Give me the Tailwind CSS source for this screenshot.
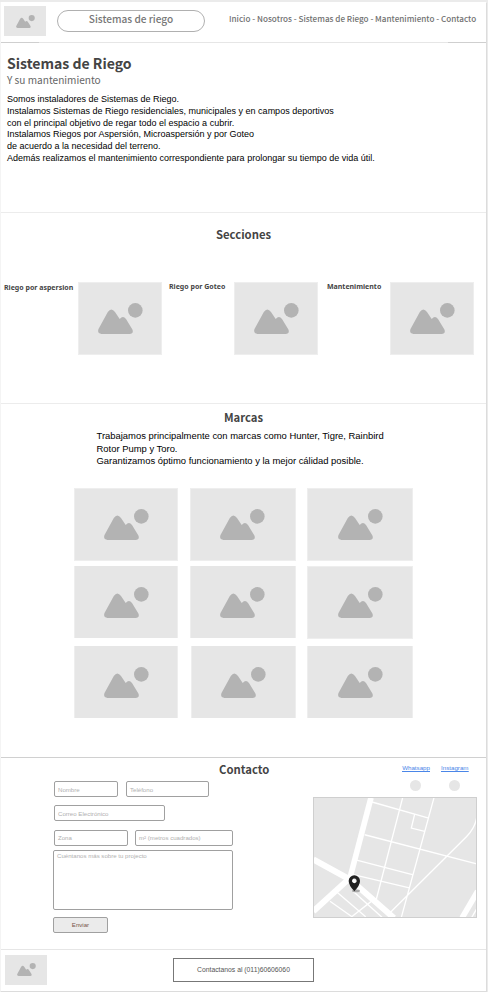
<!DOCTYPE html>
<html lang="es">
<head>
<meta charset="utf-8">
<title>Sistemas de Riego</title>
<script src="https://cdn.jsdelivr.net/npm/@tailwindcss/browser@4"></script>
</head>
<body class="bg-[#ebebeb] w-[488px] h-[992px] overflow-hidden pt-[2px] font-['Liberation_Sans',Arial,sans-serif] text-black">
<svg class="hidden">
  <symbol id="pic" viewBox="0 0 45 31">
    <circle cx="37.3" cy="7.4" r="7.3"/>
    <path d="M9.8 9Q13.3 3.8 17 9L21.7 16Q25 12.2 28 16L34.4 26.5Q36 30.6 31.5 30.9H3.5Q-1 30.5 .5 26Z"/>
  </symbol>
</svg>
<div class="w-[486px] h-[989px] bg-white border-l border-[#f4f4f4] shadow-[1px_1px_0_#dcdcdc] flex flex-col whitespace-nowrap">

  <header class="h-[41px] flex items-start">
    <div class="w-[42px] h-[30px] mt-[4px] ml-[3px] bg-[#e6e6e6] flex justify-center pt-[9px] shrink-0"><svg class="w-[19px] h-[13px] fill-[#b3b3b3]"><use href="#pic"/></svg></div>
    <div class="ml-[11px] mt-[8px] w-[148px] h-[22px] rounded-full border border-[#b0b0b0] flex justify-center shrink-0 font-['Noto_Sans_CJK_SC',sans-serif] font-medium text-[#777] text-[10.1px] leading-[15px]">Sistemas de riego</div>
    <nav class="ml-[24px] mt-[10px] font-['Noto_Sans_CJK_SC',sans-serif] font-medium text-[#707070] text-[8.15px] leading-[14px]">Inicio - Nosotros - Sistemas de Riego - Mantenimiento - Contacto</nav>
  </header>
  <div class="h-px -mt-px flex shrink-0 bg-[#e6e6e6] justify-between"><i class="w-[38px] bg-[#cfcfcf]"></i><i class="w-[38px] bg-[#cfcfcf]"></i></div>

  <section class="h-[170px] border-b border-[#ececec] pl-[6px] pt-[11px] shrink-0">
    <h1 class="font-['Noto_Sans_CJK_SC',sans-serif] font-bold text-[#444] text-[14.05px] leading-[19px]">Sistemas de Riego</h1>
    <h2 class="font-['Noto_Sans_CJK_SC',sans-serif] text-[#666] text-[10.1px] leading-[13px]">Y su mantenimiento</h2>
    <div class="mt-[8px] text-[9px] leading-[11.8px]">
      <p>Somos instaladores de Sistemas de Riego.</p>
      <p>Instalamos Sistemas de Riego residenciales, municipales y en campos deportivos</p>
      <p>con el principal objetivo de regar todo el espacio a cubrir.</p>
      <p>Instalamos Riegos por Aspersión, Microaspersión y por Goteo</p>
      <p>de acuerdo a la necesidad del terreno.</p>
      <p>Además realizamos el mantenimiento correspondiente para prolongar su tiempo de vida útil.</p>
    </div>
  </section>

  <section class="h-[191px] border-b border-[#ececec] shrink-0">
    <h2 class="text-center pt-[12px] font-['Noto_Sans_CJK_SC',sans-serif] font-bold text-[#444] text-[11.3px] leading-[18px]">Secciones</h2>
    <div class="mt-[39px] flex pl-[3px] font-['Noto_Sans',sans-serif] font-bold text-[#444] text-[7px] leading-[10px]">
      <h3 class="w-[74px] pt-px">Riego por aspersion</h3>
      <div class="w-[84px] h-[73px] bg-[#e6e6e6] border border-[#eee] pl-[19px] pt-[20px]"><svg class="w-[45px] h-[31px] fill-[#b3b3b3]"><use href="#pic"/></svg></div>
      <h3 class="w-[72px] pl-[7px]">Riego por Goteo</h3>
      <div class="w-[84px] h-[73px] bg-[#e6e6e6] border border-[#eee] pl-[19px] pt-[20px]"><svg class="w-[45px] h-[31px] fill-[#b3b3b3]"><use href="#pic"/></svg></div>
      <h3 class="w-[72px] pl-[9px]">Mantenimiento</h3>
      <div class="w-[84px] h-[73px] bg-[#e6e6e6] border border-[#eee] pl-[19px] pt-[20px]"><svg class="w-[45px] h-[31px] fill-[#b3b3b3]"><use href="#pic"/></svg></div>
    </div>
  </section>

  <section class="h-[354px] border-b border-[#d0d0d0] shrink-0">
    <h2 class="text-center pt-[4px] font-['Noto_Sans_CJK_SC',sans-serif] font-bold text-[#444] text-[11.3px] leading-[18px]">Marcas</h2>
    <div class="pl-[95.5px] mt-[4px] text-[9.43px] leading-[12.5px]">
      <p>Trabajamos principalmente con marcas como Hunter, Tigre, Rainbird</p>
      <p>Rotor Pump y Toro.</p>
      <p>Garantizamos óptimo funcionamiento y la mejor cálidad posible.</p>
    </div>
    <div class="mt-[20.5px] pl-[73px] grid grid-cols-[104px_106px_106px] gap-x-[12px] grid-rows-[72px_72px_72px] gap-y-[6px]">
      <div class="h-[73px] bg-[#e6e6e6] border border-[#eee] pl-[29px] pt-[20px]"><svg class="w-[45px] h-[31px] fill-[#b3b3b3]"><use href="#pic"/></svg></div>
      <div class="h-[73px] bg-[#e6e6e6] border border-[#eee] pl-[29px] pt-[20px]"><svg class="w-[45px] h-[31px] fill-[#b3b3b3]"><use href="#pic"/></svg></div>
      <div class="h-[73px] -ml-px bg-[#e6e6e6] border border-[#eee] pl-[30px] pt-[20px] mr-px"><svg class="w-[45px] h-[31px] fill-[#b3b3b3]"><use href="#pic"/></svg></div>
      <div class="bg-[#e6e6e6] border border-[#eee] border-y-0 pl-[29px] pt-[21px]"><svg class="w-[45px] h-[31px] fill-[#b3b3b3]"><use href="#pic"/></svg></div>
      <div class="bg-[#e6e6e6] border border-[#eee] border-y-0 pl-[29px] pt-[21px]"><svg class="w-[45px] h-[31px] fill-[#b3b3b3]"><use href="#pic"/></svg></div>
      <div class="h-[73px] -ml-px bg-[#e6e6e6] border border-[#eee] pl-[30px] pt-[20px] mr-px"><svg class="w-[45px] h-[31px] fill-[#b3b3b3]"><use href="#pic"/></svg></div>
      <div class="h-[72px] mt-[2px] bg-[#e6e6e6] border border-[#eee] border-y-0 pl-[29px] pt-[21px]"><svg class="w-[45px] h-[31px] fill-[#b3b3b3]"><use href="#pic"/></svg></div>
      <div class="h-[72px] mt-[2px] ml-px bg-[#e6e6e6] border border-[#eee] border-y-0 pl-[29px] pt-[21px]"><svg class="w-[45px] h-[31px] fill-[#b3b3b3]"><use href="#pic"/></svg></div>
      <div class="h-[72px] mt-[2px] -ml-px bg-[#e6e6e6] border border-[#eee] border-y-0 pl-[30px] pt-[21px] mr-px"><svg class="w-[45px] h-[31px] fill-[#b3b3b3]"><use href="#pic"/></svg></div>
    </div>
  </section>

  <section class="h-[192px] border-b border-[#e6e6e6] flex shrink-0">
    <form class="w-[181px] ml-[52px] pt-[23px] text-[6.1px] leading-[13px] text-[#b0b0b0]">
      <div class="flex gap-[8px] pl-px">
        <div class="w-[64px] h-[16px] border border-[#a0a0a0] rounded-[2px] pl-[3px] pt-px">Nombre</div>
        <div class="w-[83px] h-[16px] border border-[#a0a0a0] rounded-[2px] pl-[3px] pt-px">Teléfono</div>
      </div>
      <div class="ml-px mt-[8px] w-[111px] h-[16px] border border-[#a0a0a0] rounded-[2px] pl-[3px] pt-px">Correo Electrónico</div>
      <div class="flex gap-[7px] pl-px mt-[9px]">
        <div class="w-[74px] h-[16px] border border-[#a0a0a0] rounded-[2px] pl-[3px]">Zona</div>
        <div class="w-[98px] h-[16px] border border-[#a0a0a0] rounded-[2px] pl-[3px]">m² (metros cuadrados)</div>
      </div>
      <div class="mt-[4px] w-[180px] h-[60px] border border-[#a0a0a0] rounded-[2px] pl-[3px] leading-[10px]">Cuéntanos más sobre tu projecto</div>
      <div class="mt-[7px] w-[55px] h-[16px] border border-[#a0a0a0] rounded-[2px] bg-[#ebebeb] text-center text-[#775548] leading-[14px]">Enviar</div>
    </form>
    <h2 class="-ml-[15px] w-[52px] pt-[2px] font-['Noto_Sans_CJK_SC',sans-serif] font-bold text-[#444] text-[11.3px] leading-[18px]">Contacto</h2>
    <div class="ml-[42px] w-[164px]">
      <div class="flex justify-end gap-[11px] pr-[8.5px] pt-[6px] text-[6.2px] leading-[8px] text-[#4a86e8] underline">
        <a>Whatsapp</a><a>Instagram</a>
      </div>
      <div class="flex justify-end gap-[28px] pr-[17px] mt-[8px]"><i class="size-[11px] rounded-full bg-[#e6e6e6]"></i><i class="size-[11px] rounded-full bg-[#e6e6e6]"></i></div>
      <svg class="mt-[6px] w-[164px] h-[121px]" viewBox="39 142 492 362" preserveAspectRatio="none">
        <rect x="40.5" y="143.5" width="489" height="359" fill="#e6e6e6"/>
        <g stroke="#fff" fill="none" stroke-width="4">
          <path d="M213 144L150 384" stroke-width="17"/>
          <path d="M40 329L150 389L282 504" stroke-width="18"/>
          <path d="M150 384L40 484" stroke-width="18"/>
          <path d="M216 157L386 205M308 144L229 448M402 144L304 502M194 255L530 342M170 331L340 375M160 374L328 414M344 193L334 235L374 245M270 488L500 260Q526 232 530 204M112 428L197 500M90 454L157 501M155 500L213 455M160 425L246 502"/>
          <path d="M533 424L486 504" stroke-width="17"/>
          <path d="M533 472L514 504"/>
        </g>
        <rect x="40.5" y="143.5" width="489" height="359" fill="none" stroke="#cfcfcf" stroke-width="3"/>
        <ellipse cx="168" cy="423" rx="12" ry="4" fill="#aaa"/>
        <path fill="#222" fill-rule="evenodd" d="M163 424Q146 406 146 393A17 17 0 0 1 180 393Q180 406 163 424ZM163 386a7 7 0 1 0 .1 0Z"/>
      </svg>
    </div>
  </section>

  <footer class="flex items-start shrink-0">
    <div class="w-[42px] h-[30px] mt-[5px] ml-[4px] bg-[#e6e6e6] flex justify-center pt-[8px] shrink-0"><svg class="w-[19px] h-[13px] fill-[#b3b3b3]"><use href="#pic"/></svg></div>
    <div class="ml-[126px] mt-[8px] w-[141px] h-[24px] border border-[#777] text-center text-[6.8px] leading-[22px] text-[#555]">Contactanos al (011)60606060</div>
  </footer>
</div>
</body>
</html>
